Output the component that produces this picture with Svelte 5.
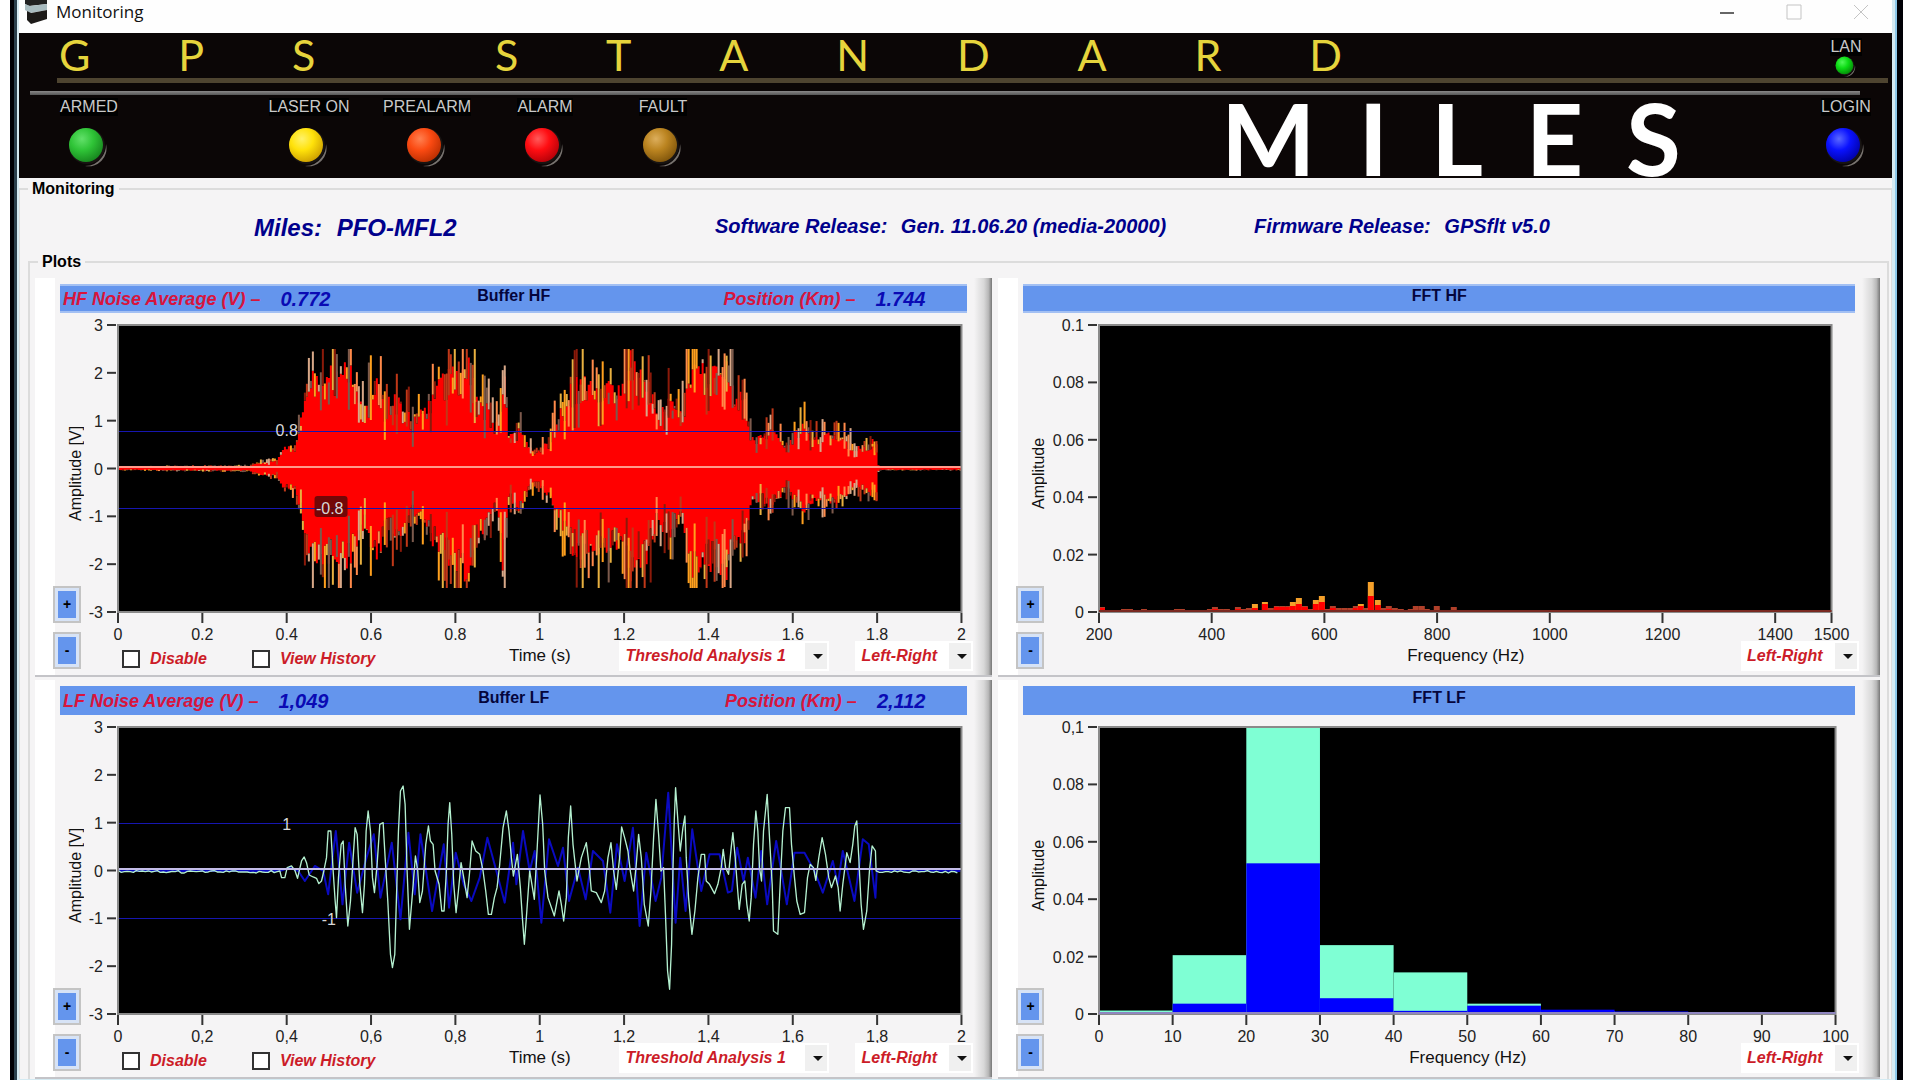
<script>
  const brand = ["G", "P", "S", "", "S", "T", "A", "N", "D", "A", "R", "D"];
  const model = ["M", "I", "L", "E", "S"];

  const lamps = [
    { label: "ARMED", color: "green" },
    { label: "LASER ON", color: "yellow" },
    { label: "PREALARM", color: "orange" },
    { label: "ALARM", color: "red" },
    { label: "FAULT", color: "brown" },
  ];

  // [position in % of the axis, label]
  const spread = (labels) => labels.map((label, i) => [(i * 100) / (labels.length - 1), label]);
  const volts = spread(["3", "2", "1", "0", "-1", "-2", "-3"]);

  const panels = [
    {
      id: "buffer-hf", kind: "time", title: "Buffer HF",
      noise: "HF Noise Average (V) –", noiseValue: "0.772", position: "1.744",
      yTitle: "Amplitude [V]", xTitle: "Time (s)", y: volts,
      x: spread(["0", "0.2", "0.4", "0.6", "0.8", "1", "1.2", "1.4", "1.6", "1.8", "2"]),
    },
    {
      id: "fft-hf", kind: "fft", title: "FFT HF",
      yTitle: "Amplitude", xTitle: "Frequency (Hz)",
      y: spread(["0.1", "0.08", "0.06", "0.04", "0.02", "0"]),
      x: [200, 400, 600, 800, 1000, 1200, 1400, 1500].map((f) => [(f - 200) / 13, String(f)]),
    },
    {
      id: "buffer-lf", kind: "time", title: "Buffer LF",
      noise: "LF Noise Average (V) –", noiseValue: "1,049", position: "2,112",
      yTitle: "Amplitude [V]", xTitle: "Time (s)", y: volts,
      x: spread(["0", "0,2", "0,4", "0,6", "0,8", "1", "1,2", "1,4", "1,6", "1,8", "2"]),
    },
    {
      id: "fft-lf", kind: "fft", title: "FFT LF",
      yTitle: "Amplitude", xTitle: "Frequency (Hz)",
      y: spread(["0,1", "0.08", "0.06", "0.04", "0.02", "0"]),
      x: spread(["0", "10", "20", "30", "40", "50", "60", "70", "80", "90", "100"]),
    },
  ];

  /* HF waveform: envelope as [seconds, volts] */
  const envelope = [
    [0, 0.03], [0.31, 0.05], [0.33, 0.12], [0.375, 0.15], [0.39, 0.4], [0.42, 0.45], [0.44, 1.3], [0.46, 1.8],
    [0.5, 1.9], [0.55, 1.95], [0.58, 1.1], [0.61, 1.8], [0.63, 1.3], [0.66, 1.4], [0.7, 0.95], [0.73, 1.2],
    [0.76, 1.7], [0.8, 2], [0.83, 2.1], [0.85, 1.4], [0.87, 1.3], [0.89, 0.8], [0.9, 1], [0.913, 2.2],
    [0.925, 0.6], [0.95, 0.8], [0.97, 0.45], [0.99, 0.3], [1.02, 0.55], [1.05, 1.2], [1.08, 1.7], [1.15, 1.7],
    [1.19, 1.5], [1.21, 2.2], [1.25, 1.8], [1.28, 1], [1.3, 1.4], [1.33, 1], [1.36, 2], [1.4, 1.9],
    [1.44, 2.2], [1.46, 1.4], [1.485, 1.4], [1.5, 0.6], [1.55, 0.75], [1.58, 0.45], [1.62, 0.9], [1.65, 0.6],
    [1.7, 0.75], [1.75, 0.4], [1.79, 0.55], [1.8, 0.6], [1.801, 0.03], [2, 0.03],
  ];

  let seed = 7;
  function random() {
    seed = (seed * 16807) % 2147483647;
    return seed / 2147483647;
  }

  function level(t) {
    const i = Math.max(1, envelope.findIndex((p) => p[0] >= t));
    const [t0, v0] = envelope[i - 1];
    const [t1, v1] = envelope[i];
    return v0 + ((v1 - v0) * (t - t0)) / (t1 - t0);
  }

  const sparkColors = ["#ffa01e", "#ff8a4a", "#8b1a0a", "#d8a888", "#c03818", "#e8b040", "#7c5a4c"];
  const sparks = [];
  let body = "";
  for (let i = 0; i < 422; i++) {
    const e = level(i / 211);
    const x = i * 2;
    const up = Math.min(2.5, e * (0.75 + 0.4 * random())) * 47.8;
    const down = Math.min(2.5, e * (0.75 + 0.4 * random())) * 47.8;
    body += `M${x} ${143.5 - up}h2V${143.5 + down}h-2z`;
    const top = Math.min(2.5, e * (0.95 + 0.75 * random() ** 2)) * 47.8;
    const bottom = Math.min(2.5, e * (0.95 + 0.65 * random() ** 2)) * 47.8;
    const fill = sparkColors[Math.floor(random() * sparkColors.length)];
    const bite = random() > 0.7 ? e * 14 : 0;
    sparks.push({ x, y: 143.5 - top, h: top - up + bite, fill });
    sparks.push({ x, y: 143.5 + down - bite, h: Math.max(0, bottom - down + bite), fill });
  }

  /* LF traces, in thirds of a pixel */
  const quiet = (from, to) => {
    let s = "";
    for (let x = from; x < to; x += 9) s += `${x},${Math.round(599 + 7 * random())} `;
    return s;
  };
  const leftTrace = quiet(355, 838) + `840,600 845,620 855,620 862,590 875,585 885,598 893,622 905,570 913,558
    920,575 928,612 940,618 950,622 957,638 965,630 972,600 980,560 985,480 993,480 1000,600 1006,690 1010,740
    1016,620 1024,520 1030,510 1036,640 1044,765 1052,690 1060,560 1066,470 1072,490 1080,640 1088,725 1094,640
    1099,480 1105,420 1112,480 1118,620 1124,665 1132,580 1140,460 1150,455 1156,560 1164,690 1172,850 1178,890
    1185,850 1190,680 1196,480 1202,360 1210,345 1216,400 1222,600 1229,775 1237,680 1247,555 1254,600 1260,695
    1268,660 1278,520 1286,465 1292,510 1300,520 1306,600 1318,640 1326,720 1333,720 1340,600 1345,460 1350,395
    1356,490 1362,640 1369,725 1376,660 1384,575 1392,620 1402,680 1410,600 1417,510 1428,540 1440,550 1450,600
    1458,660 1466,730 1475,730 1484,680 1492,650 1500,580 1510,470 1520,420 1528,480 1535,560 1541,615 1553,550
    1562,650 1568,740 1574,820 1580,740 1590,600 1604,685 1612,540 1621,372 1629,460 1635,600 1645,680 1664,735
    1678,660 1685,700 1692,750 1700,680 1706,500 1713,405 1720,520 1732,630 1745,560 1760,515 1768,580 1775,660
    1790,665 1805,695 1815,660 1825,560 1834,515 1842,600 1850,655 1860,560 1866,468 1875,500 1885,540 1892,600
    1902,660 1910,580 1917,490 1925,560 1934,700 1946,765 1954,660 1962,500 1969,385 1977,490 1984,600 1992,590
    1998,740 2004,900 2010,955 2016,820 2020,600 2024,450 2028,350 2035,450 2042,540 2050,470 2056,435 2060,560
    2067,680 2077,790 2086,720 2095,620 2105,550 2115,550 2120,630 2130,640 2145,668 2155,640 2165,590 2171,535
    2178,590 2187,610 2195,530 2200,485 2207,560 2213,640 2219,715 2228,640 2236,630 2242,700 2249,750 2255,680
    2262,520 2269,420 2275,480 2280,590 2286,630 2292,480 2303,370 2310,500 2318,640 2322,780 2335,790 2342,640
    2350,480 2358,410 2370,410 2376,520 2385,620 2392,690 2402,730 2415,725 2424,620 2432,580 2442,590 2449,628
    2458,560 2468,500 2478,550 2488,620 2496,650 2508,615 2516,650 2522,720 2530,640 2542,545 2552,575 2560,520
    2566,465 2572,450 2578,560 2585,700 2592,775 2602,720 2610,600 2618,525 2628,540 2630,600 ` + quiet(2640, 2883);
  const rightTrace = `355,600 840,600 870,590 895,600 915,630 945,585 970,600 985,670 1008,480 1028,700 1048,515
    1072,665 1100,560 1122,490 1142,680 1176,515 1202,745 1226,485 1245,670 1262,490 1297,720 1332,520 1348,710
    1368,545 1392,640 1415,690 1440,620 1463,500 1490,600 1515,695 1540,515 1550,640 1570,480 1590,600 1605,540
    1625,755 1648,505 1675,585 1690,530 1708,690 1735,590 1758,685 1780,540 1810,570 1832,725 1852,520 1875,630
    1900,470 1920,765 1940,545 1968,690 1985,620 2006,365 2028,755 2042,560 2058,720 2078,475 2105,660 2130,550
    2160,550 2185,665 2197,660 2213,530 2232,630 2245,560 2268,680 2285,540 2303,700 2330,510 2362,700 2385,545
    2415,545 2445,600 2470,665 2500,570 2515,640 2530,540 2565,690 2590,505 2608,520 2628,680 2632,598 2883,600`;

  /* HF spectrum bars: [x, peak, current] */
  const hfBars = [
    [0, 4, 3], [22, 2], [28, 2], [42, 2], [75, 2], [80, 2], [108, 2], [113, 4, 2], [119, 2], [125, 2], [136, 4, 2],
    [142, 2], [147, 3], [153, 7, 3], [163, 9, 7], [169, 3], [175, 5, 4], [181, 5, 4], [187, 5, 4], [191, 9, 5],
    [197, 13, 7], [203, 5, 4], [209, 2], [214, 11, 7], [220, 15, 9], [226, 2], [231, 5, 3], [237, 3], [243, 3],
    [249, 3], [254, 5, 3], [259, 7, 5], [264, 3], [269, 29, 15], [276, 11, 6], [282, 3], [287, 5, 2], [293, 3],
    [299, 2], [309, 2], [314, 5, 1], [320, 5, 1], [325, 2], [335, 5, 1], [352, 4, 1],
  ];
  const lfPeak = [0.0012, 0.0205, 0.1, 0.024, 0.0145, 0.0036, 0.001, 0.0005, 0, 0];
  const lfNow = [0.0002, 0.0036, 0.0525, 0.0055, 0.0011, 0.0029, 0.0015, 0.0009, 0.0003, 0.0003];
</script>

{#snippet lamp(color, small)}
  <svg class="lamp" class:small viewBox="0 0 42 42" aria-hidden="true">
    <defs>
      <radialGradient id="lamp-{color}{small ? '-s' : ''}" cx="0.38" cy="0.32" r="0.75">
        <stop offset="0" class="{color} hi" />
        <stop offset="0.45" class={color} />
        <stop offset="1" class="{color} lo" />
      </radialGradient>
    </defs>
    <path d="M38 17a18 18 0 0 1-21 22 21 21 0 0 0 17-9 21 21 0 0 0 4-13z" fill="#77726e" />
    <circle cx="19" cy="19" r="18" fill="#181412" />
    <circle cx="18" cy="18" r="17" fill="url(#lamp-{color}{small ? '-s' : ''})" />
  </svg>
{/snippet}

<div class="frame">
  <div class="window">
    <header class="titlebar">
      <svg class="app-icon" viewBox="0 0 22 24" aria-hidden="true">
        <path d="M0 0h22v4L4 6 0 4z" fill="#222" />
        <path d="M0 4l5 2 17-2v6L5 13 0 10z" fill="#a9bcc0" />
        <path d="M2 11l4 2 16-3v9L6 24l-4-4z" fill="#1c1a18" />
      </svg>
      <span class="title">Monitoring</span>
      <div class="window-buttons">
        <button aria-label="Minimize"><svg viewBox="0 0 16 16"><path d="M1 9h14" stroke="#666" stroke-width="2" /></svg></button>
        <button aria-label="Maximize"><svg viewBox="0 0 16 16"><path d="M1 1h14v14H1z" /></svg></button>
        <button aria-label="Close"><svg viewBox="0 0 16 16"><path d="M1 1l14 14M15 1L1 15" /></svg></button>
      </div>
    </header>

    <section class="banner">
      <div class="brand-row">
        <h1 class="brand">
          {#each brand as letter}
            <span class:space={!letter}>{letter}</span>
          {/each}
        </h1>
        <div class="status lan">
          <span class="status-label">LAN</span>
          {@render lamp("lime", true)}
        </div>
      </div>
      <div class="rule gold"></div>
      <div class="rule gray"></div>
      <div class="lamp-row">
        {#each lamps as item}
          <div class="status">
            <span class="status-label">{item.label}</span>
            {@render lamp(item.color, false)}
          </div>
        {/each}
        <h2 class="model">
          {#each model as letter}<span>{letter}</span>{/each}
        </h2>
        <div class="status login">
          <span class="status-label">LOGIN</span>
          {@render lamp("blue", false)}
        </div>
      </div>
    </section>

    <main>
      <fieldset class="monitoring">
        <legend>Monitoring</legend>
        <div class="info">
          <div class="unit"><span>Miles:</span> <span>PFO-MFL2</span></div>
          <div><span>Software Release:</span> <span>Gen. 11.06.20 (media-20000)</span></div>
          <div><span>Firmware Release:</span> <span>GPSflt v5.0</span></div>
        </div>

        <fieldset class="plots">
          <legend>Plots</legend>
          <div class="panels">
            {#each panels as panel}
              <article class="panel {panel.kind} {panel.id}">
                <div class="panel-head">
                  {#if panel.noise}
                    <div class="reading"><span>{panel.noise}</span><output>{panel.noiseValue}</output></div>
                  {/if}
                  <h3>{panel.title}</h3>
                  {#if panel.position}
                    <div class="reading right"><span>Position (Km) –</span><output>{panel.position}</output></div>
                  {/if}
                </div>

                <div class="panel-body">
                  <div class="side">
                    <span class="y-title">{panel.yTitle}</span>
                    <div class="zoom">
                      <button><span>+</span></button>
                      <button><span>-</span></button>
                    </div>
                  </div>

                  <div class="plot">
                    <svg class="chart" role="img" aria-label={panel.title}>
                      <rect width="100%" height="100%" fill="#000" />
                      {#if panel.id === "buffer-hf"}
                        <svg viewBox="0 0 844 287" width="100%" height="100%" preserveAspectRatio="none">
                          <path d={body} fill="#f00" />
                          {#each sparks as s}
                            {#if s.h > 0}<rect x={s.x} y={s.y} width="2" height={s.h} fill={s.fill} />{/if}
                          {/each}
                        </svg>
                        <line class="threshold" x1="0" x2="100%" y1="106.5" y2="106.5" />
                        <line class="threshold" x1="0" x2="100%" y1="183.5" y2="183.5" />
                        <line x1="0" x2="100%" y1="142" y2="142" stroke="#ff9a8a" stroke-width="2" />
                        <rect x="23.3%" y="171" width="33" height="21" rx="3" fill="#5a0808" opacity="0.85" />
                        <text class="mark" x="20%" y="111">0.8</text>
                        <text class="mark" x="25.1%" y="189">-0.8</text>
                      {:else if panel.id === "buffer-lf"}
                        <line class="threshold" x1="0" x2="100%" y1="96.5" y2="96.5" />
                        <line class="threshold" x1="0" x2="100%" y1="191.5" y2="191.5" />
                        <svg viewBox="0 0 844 287" width="100%" height="100%" preserveAspectRatio="none">
                          <g transform="translate(-118 -56) scale(0.3333)" fill="none" stroke-linejoin="round">
                            <polyline points={rightTrace} stroke="#0a0ac0" stroke-width="6" />
                            <polyline points={leftTrace} stroke="#b4f0d0" stroke-width="4" />
                          </g>
                        </svg>
                        <line x1="0" x2="100%" y1="142" y2="142" stroke="#c4bde8" stroke-width="2" />
                        <text class="mark" x="20%" y="103">1</text>
                        <text class="mark" x="25%" y="198">-1</text>
                      {:else if panel.id === "fft-hf"}
                        <svg viewBox="0 0 733 287" width="100%" height="100%" preserveAspectRatio="none">
                          {#each hfBars as [x, peak, now = 0]}
                            <rect {x} y={286 - peak} width="6" height={peak} fill={peak > 6 ? "#f5a02a" : "#b0402a"} />
                            <rect {x} y={286 - now} width="6" height={now} fill="#f00" />
                          {/each}
                        </svg>
                      {:else}
                        {#each lfPeak as peak, i}
                          <rect x="{i * 10}%" y="{100 - peak * 1000}%" width="10%" height="{peak * 1000}%" fill="#7fffd4" />
                          <rect x="{i * 10}%" y="{100 - lfNow[i] * 1000}%" width="10%" height="{lfNow[i] * 1000}%" fill="#00f" />
                        {/each}
                      {/if}
                      <rect class="edge" width="100%" height="100%" />
                      {#if panel.kind === "fft"}
                        <line class="base" x1="0" x2="100%" y1="286" y2="286" />
                      {/if}
                      {#each panel.y as [at, label]}
                        <line class="tick" x1="-11" x2="-2" y1="{at}%" y2="{at}%" />
                        <text class="y-label" x="-15" y="{at}%" dy="6">{label}</text>
                      {/each}
                      {#each panel.x as [at, label]}
                        <line class="tick" x1="{at}%" x2="{at}%" y1="288" y2="298" />
                        <text class="x-label" x="{at}%" y="315">{label}</text>
                      {/each}
                    </svg>

                    <div class="controls">
                      <div class="checks">
                        {#if panel.kind === "time"}
                          <label><input type="checkbox" />Disable</label>
                          <label><input type="checkbox" />View History</label>
                        {/if}
                      </div>
                      <span class="x-title">{panel.xTitle}</span>
                      <div class="selects">
                        {#if panel.kind === "time"}
                          <span class="drop wide">
                            <select aria-label="{panel.title} analysis"><option>Threshold Analysis 1</option></select>
                          </span>
                        {/if}
                        <span class="drop">
                          <select aria-label="{panel.title} channel"><option>Left-Right</option></select>
                        </span>
                      </div>
                    </div>
                  </div>
                </div>
              </article>
            {/each}
          </div>
        </fieldset>
      </fieldset>
    </main>
  </div>
</div>

<style>
  :global(body) {
    background: #fff;
    overflow: hidden;
  }

  .frame {
    margin: 0 17px 0 10px;
    border-left: 4px solid #000005;
    border-right: 6px solid #000005;
    font-family: "Liberation Sans", Arial, sans-serif;
    font-size: 16px;
    color: #111;
  }
  .window {
    min-height: 100vh;
    box-sizing: border-box;
    padding: 0 3px 0 2px;
    border-left: 3px solid #2a3f4c;
    border-right: 2px solid #8cc8ea;
    background: #d4eaf2;
  }
  h1, h2, h3 {
    margin: 0;
    font-weight: 400;
  }

  /* Title bar */
  .titlebar {
    display: flex;
    align-items: flex-start;
    height: 33px;
    padding: 0 23px 0 6px;
    background: #fefefe;
  }
  .app-icon {
    width: 22px;
    height: 24px;
  }
  .title {
    margin-left: 9px;
    font-family: "Open Sans", "Liberation Sans", sans-serif;
    font-size: 17px;
    line-height: 24px;
  }
  .window-buttons {
    display: flex;
    gap: 51px;
    margin-left: auto;
  }
  .window-buttons button {
    width: 16px;
    height: 24px;
    padding: 4px 0;
    border: 0;
    background: none;
  }
  .window-buttons svg {
    display: block;
    width: 16px;
    height: 16px;
    fill: none;
    stroke: #c4c4c4;
  }

  /* Banner */
  .banner {
    height: 145px;
    background: #0b0606;
  }
  .brand-row {
    display: flex;
    justify-content: space-between;
    height: 45px;
  }
  .brand {
    display: flex;
    justify-content: space-between;
    width: 68.5%;
    margin-left: 40px;
    font-family: Lato, sans-serif;
    font-size: 43px;
    line-height: 44px;
    color: #e6d43c;
  }
  .brand .space {
    width: 4px;
  }
  .rule.gold {
    height: 5px;
    margin: 0 4px 8px 38px;
    background: #4e4430;
  }
  .rule.gray {
    height: 4px;
    margin: 0 32px 0 11px;
    background: linear-gradient(#8a8888, #555);
  }
  .lamp-row {
    display: flex;
    height: 82px;
    padding-left: 11px;
  }
  .status {
    display: flex;
    flex-direction: column;
    align-items: center;
    width: 118px;
    padding-top: 3px;
  }
  .status:first-child {
    margin-right: 102px;
  }
  .status-label {
    background: #000;
    color: #c9c9c9;
    font-size: 16px;
    line-height: 18px;
    white-space: nowrap;
  }
  .lamp {
    width: 42px;
    height: 42px;
    margin-top: 11px;
  }
  .lamp.small {
    width: 22px;
    height: 22px;
    margin-top: 0;
  }
  .status.lan, .status.login {
    width: 92px;
  }
  .status.lan {
    padding-top: 5px;
  }
  .model {
    display: flex;
    justify-content: space-between;
    width: 460px;
    margin: 0 119px 0 auto;
    font-family: Lato, sans-serif;
    font-size: 100px;
    font-weight: 700;
    line-height: 84px;
    color: #fff;
  }
  .green { stop-color: #2fc437; }
  .green.hi { stop-color: #62e06a; }
  .green.lo { stop-color: #15801c; }
  .yellow { stop-color: #ffe20a; }
  .yellow.hi { stop-color: #fff26a; }
  .yellow.lo { stop-color: #c99a00; }
  .orange { stop-color: #fb4a12; }
  .orange.hi { stop-color: #ff8050; }
  .orange.lo { stop-color: #b52c00; }
  .red { stop-color: #ff0d12; }
  .red.hi { stop-color: #ff5a5a; }
  .red.lo { stop-color: #b00008; }
  .brown { stop-color: #bb8420; }
  .brown.hi { stop-color: #dcae5c; }
  .brown.lo { stop-color: #7c520a; }
  .lime { stop-color: #0cdc14; }
  .lime.hi { stop-color: #52f858; }
  .lime.lo { stop-color: #048008; }
  .blue { stop-color: #0a12ff; }
  .blue.hi { stop-color: #5a68ff; }
  .blue.lo { stop-color: #0000a0; }

  /* Group boxes */
  main {
    background: #f5f4f5;
  }
  fieldset {
    min-width: 0;
    margin: 0;
    padding: 0;
    border: 2px solid #dcdcdc;
    border-bottom: 0;
  }
  legend {
    margin-left: 8px;
    padding: 0 4px;
    font-weight: 700;
    line-height: 22px;
    color: #000;
  }
  .monitoring {
    border-left-width: 1px;
    border-right-width: 1px;
  }
  .plots {
    margin: 0 2px 0 8px;
  }
  .info {
    display: grid;
    grid-template-columns: 461fr 539fr 637fr;
    align-items: center;
    height: 51px;
    padding: 0 0 0 234px;
    box-sizing: border-box;
    color: #00008c;
    font-size: 20px;
    font-style: italic;
    font-weight: 700;
    line-height: 24px;
    white-space: nowrap;
  }
  .info span + span {
    margin-left: 8px;
  }
  .info .unit {
    font-size: 24px;
    padding-top: 4px;
  }

  /* Panels */
  .panels {
    display: grid;
    grid-template-columns: 958fr 882fr;
    gap: 3px 6px;
    padding: 5px 7px 0 5px;
  }
  .panel {
    --axis: 33px;
    --end: 6px;
    --over: 12px;
    min-width: 0;
    padding: 6px 25px 4px 18px;
    border-bottom: 2px solid #c4c4c8;
    background:
      linear-gradient(90deg, #f5f4f5, #d8d8d8 55%, #b8b8b8 80%, #777) right / 18px 100% no-repeat,
      linear-gradient(#fff, #fff) left / 20px 100% no-repeat,
      #f5f4f5;
  }
  .panel.fft {
    --axis: 51px;
    --end: 23px;
    --over: 27px;
  }
  .panel.fft-lf {
    --end: 19px;
    --over: 23px;
  }
  .panel-head {
    display: grid;
    grid-template-columns: 1fr auto 1fr;
    align-items: center;
    height: 29px;
    margin-left: 7px;
    box-sizing: border-box;
    border-top: 2px solid #a3c0f3;
    border-bottom: 2px solid #a3c0f3;
    background: #6495ed;
  }
  .buffer-lf .panel-head, .fft-lf .panel-head {
    border-color: #6495ed;
  }
  .panel-head h3 {
    grid-column: 2;
    font-size: 16px;
    font-weight: 700;
    line-height: 20px;
    padding-bottom: 5px;
    color: #05053c;
  }
  .reading {
    display: flex;
    align-items: center;
    gap: 20px;
    padding: 1px 0 0 3px;
    color: #d8143c;
    font-size: 18px;
    font-style: italic;
    font-weight: 700;
    line-height: 20px;
    white-space: nowrap;
  }
  .reading output {
    color: #0a0ab4;
    font-size: 20px;
  }
  .reading.right {
    justify-content: flex-end;
    padding-right: 42px;
  }
  .panel-body {
    display: flex;
    margin-top: 12px;
  }
  .side {
    display: flex;
    flex-direction: column;
    justify-content: space-between;
    flex: none;
    width: 32px;
    margin-right: var(--axis);
    padding: 96px 0 2px;
    box-sizing: border-box;
  }
  .y-title {
    align-self: flex-end;
    writing-mode: vertical-rl;
    transform: rotate(180deg);
    height: 104px;
    text-align: center;
    font-size: 16px;
    line-height: 18px;
  }
  .zoom {
    display: flex;
    flex-direction: column;
    gap: 9px;
  }
  .zoom button {
    display: flex;
    width: 28px;
    height: 37px;
    padding: 3px;
    border: 2px solid #c4c4c4;
    background: #d7e3f6;
    font: 700 14px/26px "Liberation Sans", Arial, sans-serif;
    color: #000;
  }
  .zoom span {
    flex: 1;
    background: #6495ed;
  }
  .plot {
    flex: 1;
    min-width: 0;
    margin-right: var(--end);
  }
  .chart {
    display: block;
    width: 100%;
    height: 287px;
    margin-bottom: 29px;
    overflow: visible;
  }
  .chart text {
    font-size: 16px;
    fill: #222;
  }
  .chart .x-label, .chart .mark {
    text-anchor: middle;
  }
  .chart .y-label {
    text-anchor: end;
  }
  .chart .mark {
    fill: #d8d8d8;
  }
  .edge {
    fill: none;
    stroke: #8a8a8a;
    stroke-width: 2;
  }
  .base {
    stroke: #7a2a22;
    stroke-width: 2;
  }
  .fft-lf .base {
    stroke: #8f86c0;
  }
  .tick {
    stroke: #333;
    stroke-width: 2;
  }
  .threshold {
    stroke: #1616b0;
    stroke-width: 1;
  }

  /* Controls under each plot */
  .controls {
    display: grid;
    grid-template-columns: 1fr auto 1fr;
    align-items: center;
    height: 30px;
    white-space: nowrap;
  }
  .checks {
    display: flex;
    gap: 45px;
    padding: 6px 0 0 4px;
  }
  .checks label {
    display: flex;
    align-items: center;
    gap: 10px;
    color: #cc1c28;
    font-style: italic;
    font-weight: 700;
  }
  .checks input {
    appearance: none;
    width: 18px;
    height: 18px;
    margin: 0;
    border: 2px solid #333;
    background: #fff;
  }
  .x-title {
    font-size: 17px;
    line-height: 28px;
  }
  .selects {
    display: flex;
    justify-content: flex-end;
    gap: 26px;
    margin-right: calc(-1 * var(--over));
  }
  .drop {
    position: relative;
    width: 118px;
    height: 30px;
    background: #fff;
  }
  .drop.wide {
    width: 210px;
  }
  .drop select {
    appearance: none;
    width: 100%;
    height: 30px;
    padding: 0 24px 0 6px;
    border: 0;
    background: linear-gradient(#f0f0f0, #f0f0f0) right 2px center / 22px 26px no-repeat;
    color: #cc1c28;
    font: italic 700 16px/30px "Liberation Sans", Arial, sans-serif;
  }
  .drop::after {
    content: "";
    position: absolute;
    top: 13px;
    right: 6px;
    border: 5px solid transparent;
    border-top-color: #111;
    border-bottom: 0;
    pointer-events: none;
  }
</style>
